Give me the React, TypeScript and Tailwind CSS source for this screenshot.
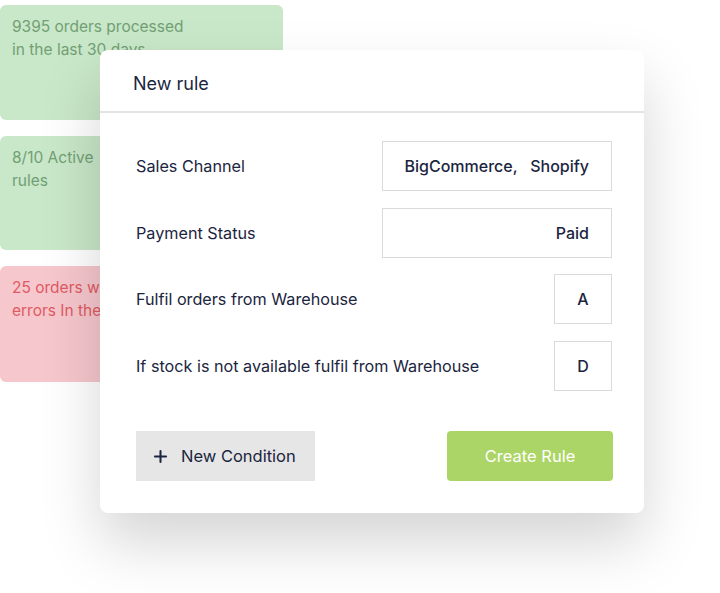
import { Plus } from 'lucide-react'

const stats = [
  { lines: ['9395 orders processed', 'in the last 30 days'], tone: 'green', h: 'h-[115px]' },
  { lines: ['8/10 Active', 'rules'], tone: 'green', h: 'h-[114px]' },
  { lines: ['25 orders with', 'errors In the last 30 days'], tone: 'red', h: 'h-[116px]' },
]

const conditions = [
  { label: 'Sales Channel', value: 'BigCommerce,   Shopify', wide: true },
  { label: 'Payment Status', value: 'Paid', wide: true },
  { label: 'Fulfil orders from Warehouse', value: 'A', wide: false },
  { label: 'If stock is not available fulfil from Warehouse', value: 'D', wide: false },
]

export default function App() {
  return (
    <div className="relative w-[720px] h-[593px] bg-white overflow-hidden font-['Inter',sans-serif]">
      {/* stat cards behind the dialog */}
      <div className="flex flex-col gap-[16px] pt-[5px] w-[283px]">
        {stats.map((s, i) => (
          <div
            key={i}
            className={
              s.tone === 'green'
                ? `${s.h} rounded-md bg-[#c9e7c9] text-[#72a074] px-3 pt-[10px] text-[15.5px] leading-[23px]`
                : `${s.h} rounded-md bg-[#f6c7cd] text-[#df5a62] px-3 pt-[10px] text-[15.5px] leading-[23px]`
            }
          >
            {s.lines.map((l) => (
              <p key={l} className="whitespace-nowrap">{l}</p>
            ))}
          </div>
        ))}
      </div>

      {/* dialog */}
      <div className="absolute left-[100px] top-[50px] w-[544px] h-[463px] bg-white rounded-lg shadow-[0_30px_60px_rgba(0,0,0,0.17)] text-[#1b2540]">
        <div className="h-[63px] border-b-2 border-[#e4e4e4] pl-[33px] pt-[22px]">
          <h2 className="text-[18px] leading-6">New rule</h2>
        </div>

        <div className="pl-[36px] pr-[32px] pt-[28px] flex flex-col gap-[16.7px]">
          {conditions.map((c) => (
            <div key={c.label} className="flex items-center justify-between h-[50px]">
              <span className="text-[16.2px]">{c.label}</span>
              <div
                className={`${c.wide ? 'w-[230px] justify-end px-[22px]' : 'w-[58px] justify-center'} h-[50px] flex items-center border border-[#dadada] text-[16px] font-medium whitespace-pre`}
              >
                {c.value}
              </div>
            </div>
          ))}
        </div>

        <div className="flex justify-between pl-[36px] pr-[31px] mt-[40px]">
          <button className="w-[179px] h-[50px] bg-[#e6e6e6] flex items-center gap-[11px] pl-[15px] text-[16.5px]">
            <Plus size={19} strokeWidth={2.6} />
            New Condition
          </button>
          <button className="w-[166px] h-[50px] bg-[#abd566] text-white text-[16.5px] rounded-sm">
            Create Rule
          </button>
        </div>
      </div>
    </div>
  )
}
